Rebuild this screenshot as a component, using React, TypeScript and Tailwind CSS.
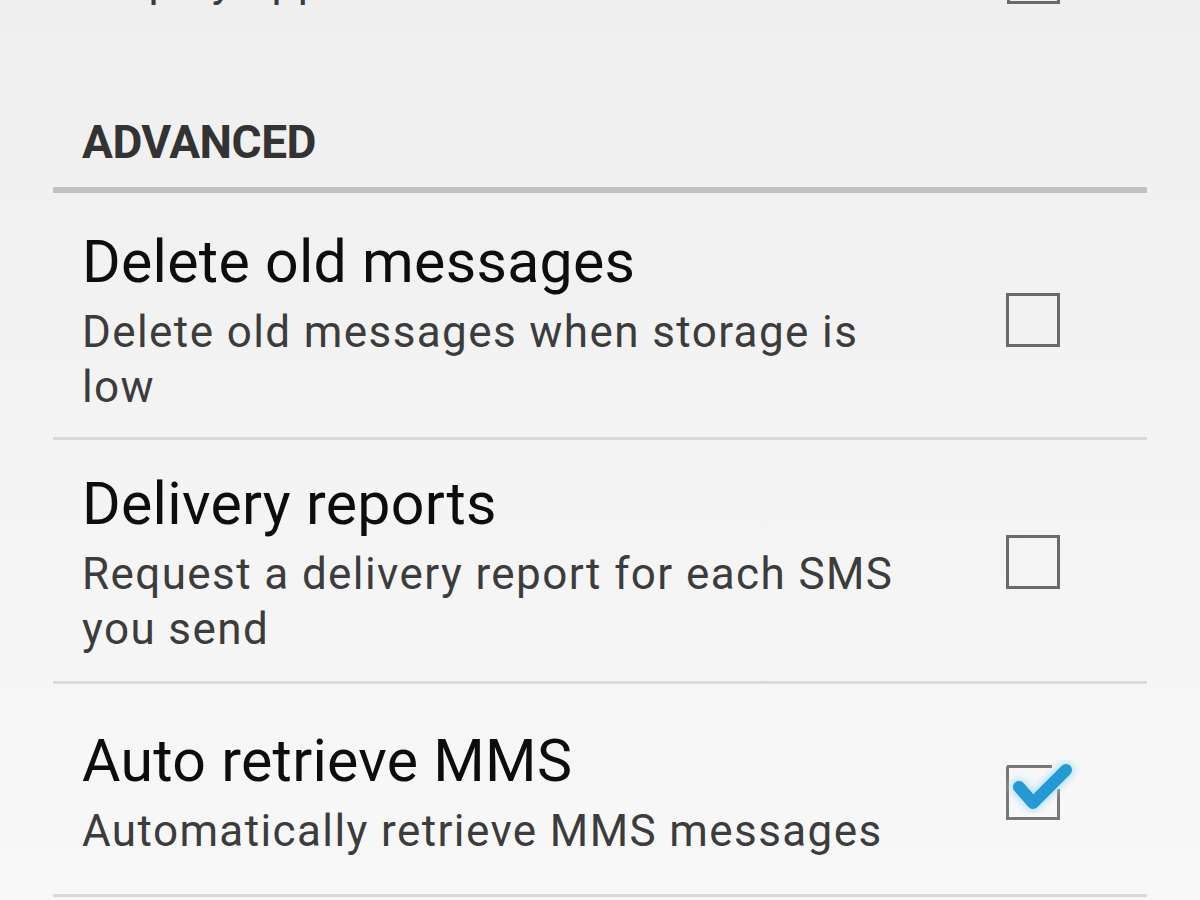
import React from "react";

interface Pref {
  title: string;
  summary: string;
  checked: boolean;
  pad: string;
}

const prefs: Pref[] = [
  {
    title: "Delete old messages",
    summary: "Delete old messages when storage is low",
    checked: false,
    pad: "pt-[34px] pb-[22px]",
  },
  {
    title: "Delivery reports",
    summary: "Request a delivery report for each SMS you send",
    checked: false,
    pad: "pt-[29px] pb-[24px]",
  },
  {
    title: "Auto retrieve MMS",
    summary: "Automatically retrieve MMS messages",
    checked: true,
    pad: "pt-[42px] pb-[35px]",
  },
];

function CheckBox({ checked }: { checked: boolean }) {
  return (
    <svg width="80" height="70" viewBox="0 0 80 70" className="overflow-visible">
      <defs>
        <filter id="glow" x="-30%" y="-30%" width="160%" height="160%">
          <feGaussianBlur stdDeviation="3" />
        </filter>
      </defs>
      {checked ? (
        <>
          <path
            d="M9 8.5 H54 M60.5 31 V60.5 H9.5 V8.5"
            fill="none"
            stroke="#777"
            strokeWidth="3"
          />
          <polyline
            points="21,29 35,45 68,12"
            fill="none"
            stroke="#a8e0f7"
            strokeWidth="18"
            strokeLinecap="round"
            strokeLinejoin="round"
            filter="url(#glow)"
            opacity="0.75"
          />
          <polyline
            points="21,29 35,45 68,12"
            fill="none"
            stroke="#239ad4"
            strokeWidth="12"
            strokeLinecap="round"
            strokeLinejoin="round"
          />
        </>
      ) : (
        <rect
          x="9.5"
          y="8.5"
          width="51"
          height="51"
          fill="none"
          stroke="#6a6a6a"
          strokeWidth="3"
        />
      )}
    </svg>
  );
}

export default function App() {
  return (
    <div
      className="w-[1200px] h-[900px] overflow-hidden bg-gradient-to-b from-[#efefef] to-[#f8f8f8] px-[53px] flex flex-col"
      style={{ fontFamily: "Roboto, 'Noto Sans', sans-serif" }}
    >
      {/* tail of the previous preference, cut off by the top edge */}
      <div className="h-[6px] overflow-hidden flex items-end shrink-0">
        <div className="flex-1 relative h-full">
          <div className="absolute bottom-[-3px] left-[29px] whitespace-nowrap text-[44px] leading-[55px] tracking-[1.4px] text-[#3c3c3c]">
            Display app
          </div>
        </div>
        <div className="w-[53px] h-[4px] border-x-[3px] border-b-[3px] border-[#6a6a6a] mr-[87px] mb-[2px]" />
      </div>

      <div className="pt-[109px] pl-[29px] text-[46px] leading-[54px] font-bold text-[#333] tracking-[-0.5px] shrink-0">
        ADVANCED
      </div>
      <div className="mt-[18px] h-[6px] bg-[#c2c2c2] shrink-0" />

      {prefs.map((p) => (
        <div key={p.title} className="shrink-0">
          <div className={`flex items-center ${p.pad}`}>
            <div className="flex-1 pl-[29px] pr-[60px]">
              <div className="text-[59px] leading-[70px] tracking-[0.3px] text-[#0d0d0d]">
                {p.title}
              </div>
              <div className="mt-[8px] text-[44px] leading-[55px] tracking-[1.4px] text-[#3c3c3c]">
                {p.summary}
              </div>
            </div>
            <div className="w-[80px] mr-[69px] flex items-center justify-center">
              <CheckBox checked={p.checked} />
            </div>
          </div>
          <div className="h-[3px] bg-[#d9d9d9]" />
        </div>
      ))}
    </div>
  );
}
